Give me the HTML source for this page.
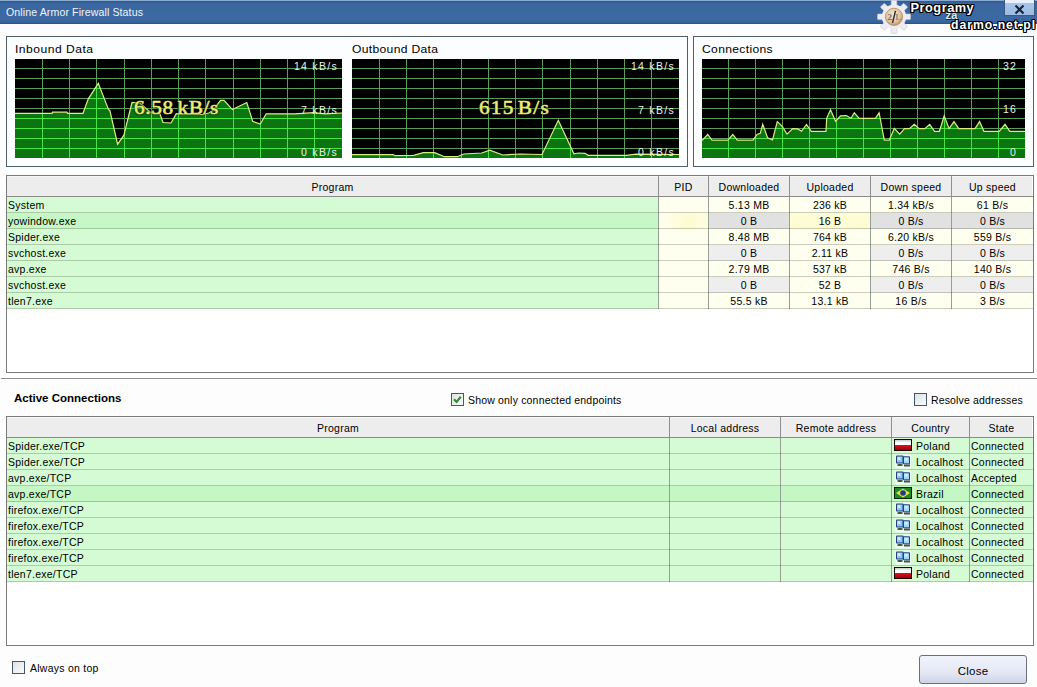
<!DOCTYPE html>
<html><head><meta charset="utf-8"><style>
html,body{margin:0;padding:0}
body{width:1037px;height:687px;position:relative;overflow:hidden;background:#fdfdfd;font-family:"Liberation Sans",sans-serif;font-size:10.5px;color:#000;letter-spacing:0.25px}
.a{position:absolute;white-space:nowrap}
.box{position:absolute;border:1px solid #4e5e6b;background:#fbfdfe}
.lbl{color:#e8f4e8}
.cb{position:absolute;width:11px;height:11px;border:1px solid #44586c;background:linear-gradient(135deg,#dde4e6,#f8fbfb)}
</style></head><body>
<div class="a" style="left:0;top:0;width:1037px;height:24px;background:linear-gradient(#8aaad2 0,#8aaad2 1px,#2f5990 1px,#3a679f 4px,#3c69a1 20px,#34609a 23px,#2a4a74 24px)"></div>
<div class="a" style="left:6px;top:0.13px;line-height:24px;font-size:10.6px;color:#eef4fa;letter-spacing:0.1px;">Online Armor Firewall Status</div>
<div class="box" style="left:6px;top:36px;width:680px;height:129px"></div>
<div class="box" style="left:693px;top:36px;width:339px;height:129px"></div>
<div class="a" style="left:15px;top:41.99px;line-height:14px;font-size:11px;letter-spacing:0.45px;transform:scaleX(1.1);transform-origin:0 0;">Inbound Data</div>
<div class="a" style="left:352px;top:41.99px;line-height:14px;font-size:11px;letter-spacing:0.3px;transform:scaleX(1.1);transform-origin:0 0;">Outbound Data</div>
<div class="a" style="left:702px;top:41.99px;line-height:14px;font-size:11px;letter-spacing:0.3px;transform:scaleX(1.1);transform-origin:0 0;">Connections</div>
<svg class="a" style="left:15px;top:59px" width="327" height="99" viewBox="0 0 327 99">
<rect width="327" height="99" fill="#000"/>
<defs><clipPath id="c15"><polygon points="0,99 0.0,54.3 37.0,54.3 37.5,53.2 52.0,53.2 52.5,54.3 68.0,54.3 73.3,39.8 83.3,24.4 93.4,50.2 95.0,52.0 102.6,85.2 108.8,76.4 117.0,43.5 125.0,44.0 135.0,53.0 145.0,55.0 148.0,63.5 156.0,64.0 161.3,54.6 187.0,55.5 193.8,54.0 197.6,51.5 205.6,41.3 209.0,41.3 217.4,50.6 231.8,43.5 237.7,62.4 245.3,65.0 251.2,54.8 279.9,54.8 298.4,53.7 310.0,54.8 327.0,54.0 327,99"/></clipPath></defs>
<polygon points="0,99 0.0,54.3 37.0,54.3 37.5,53.2 52.0,53.2 52.5,54.3 68.0,54.3 73.3,39.8 83.3,24.4 93.4,50.2 95.0,52.0 102.6,85.2 108.8,76.4 117.0,43.5 125.0,44.0 135.0,53.0 145.0,55.0 148.0,63.5 156.0,64.0 161.3,54.6 187.0,55.5 193.8,54.0 197.6,51.5 205.6,41.3 209.0,41.3 217.4,50.6 231.8,43.5 237.7,62.4 245.3,65.0 251.2,54.8 279.9,54.8 298.4,53.7 310.0,54.8 327.0,54.0 327,99" fill="#0c7411"/>
<path d="M0 9.5H327M0 19.5H327M0 29.5H327M0 39.5H327M0 49.5H327M0 59.5H327M0 69.5H327M0 79.5H327M0 89.5H327M27.5 0V99M54.5 0V99M81.5 0V99M109.5 0V99M136.5 0V99M163.5 0V99M190.5 0V99M218.5 0V99M245.5 0V99M272.5 0V99M299.5 0V99" stroke="#5a9e5a" stroke-width="1" fill="none"/>
<path d="M0 9.5H327M0 19.5H327M0 29.5H327M0 39.5H327M0 49.5H327M0 59.5H327M0 69.5H327M0 79.5H327M0 89.5H327M27.5 0V99M54.5 0V99M81.5 0V99M109.5 0V99M136.5 0V99M163.5 0V99M190.5 0V99M218.5 0V99M245.5 0V99M272.5 0V99M299.5 0V99" stroke="#46e446" stroke-width="1" fill="none" clip-path="url(#c15)"/>
<polyline points="0.0,54.3 37.0,54.3 37.5,53.2 52.0,53.2 52.5,54.3 68.0,54.3 73.3,39.8 83.3,24.4 93.4,50.2 95.0,52.0 102.6,85.2 108.8,76.4 117.0,43.5 125.0,44.0 135.0,53.0 145.0,55.0 148.0,63.5 156.0,64.0 161.3,54.6 187.0,55.5 193.8,54.0 197.6,51.5 205.6,41.3 209.0,41.3 217.4,50.6 231.8,43.5 237.7,62.4 245.3,65.0 251.2,54.8 279.9,54.8 298.4,53.7 310.0,54.8 327.0,54.0" stroke="#d8f080" stroke-width="1.2" fill="none"/>
</svg>
<svg class="a" style="left:352px;top:59px" width="327" height="99" viewBox="0 0 327 99">
<rect width="327" height="99" fill="#000"/>
<defs><clipPath id="c352"><polygon points="0,99 0.0,95.6 41.3,95.6 43.0,96.7 61.6,96.4 71.3,93.6 82.7,93.6 92.4,97.7 105.3,97.7 111.8,95.0 129.7,94.0 137.8,91.2 150.7,96.0 168.0,95.0 190.0,95.5 206.3,61.3 221.9,94.8 226.6,94.0 233.0,94.3 236.2,96.3 274.4,96.3 284.0,95.2 327.0,95.5 327,99"/></clipPath></defs>
<polygon points="0,99 0.0,95.6 41.3,95.6 43.0,96.7 61.6,96.4 71.3,93.6 82.7,93.6 92.4,97.7 105.3,97.7 111.8,95.0 129.7,94.0 137.8,91.2 150.7,96.0 168.0,95.0 190.0,95.5 206.3,61.3 221.9,94.8 226.6,94.0 233.0,94.3 236.2,96.3 274.4,96.3 284.0,95.2 327.0,95.5 327,99" fill="#0c7411"/>
<path d="M0 9.5H327M0 19.5H327M0 29.5H327M0 39.5H327M0 49.5H327M0 59.5H327M0 69.5H327M0 79.5H327M0 89.5H327M27.5 0V99M54.5 0V99M81.5 0V99M109.5 0V99M136.5 0V99M163.5 0V99M190.5 0V99M218.5 0V99M245.5 0V99M272.5 0V99M299.5 0V99" stroke="#5a9e5a" stroke-width="1" fill="none"/>
<path d="M0 9.5H327M0 19.5H327M0 29.5H327M0 39.5H327M0 49.5H327M0 59.5H327M0 69.5H327M0 79.5H327M0 89.5H327M27.5 0V99M54.5 0V99M81.5 0V99M109.5 0V99M136.5 0V99M163.5 0V99M190.5 0V99M218.5 0V99M245.5 0V99M272.5 0V99M299.5 0V99" stroke="#46e446" stroke-width="1" fill="none" clip-path="url(#c352)"/>
<polyline points="0.0,95.6 41.3,95.6 43.0,96.7 61.6,96.4 71.3,93.6 82.7,93.6 92.4,97.7 105.3,97.7 111.8,95.0 129.7,94.0 137.8,91.2 150.7,96.0 168.0,95.0 190.0,95.5 206.3,61.3 221.9,94.8 226.6,94.0 233.0,94.3 236.2,96.3 274.4,96.3 284.0,95.2 327.0,95.5" stroke="#d8f080" stroke-width="1.2" fill="none"/>
</svg>
<svg class="a" style="left:702px;top:59px" width="323" height="99" viewBox="0 0 323 99">
<rect width="323" height="99" fill="#000"/>
<defs><clipPath id="c702"><polygon points="0,99 0.0,81.5 5.7,75.5 10.0,81.2 25.9,81.2 30.8,75.5 35.3,81.2 51.0,81.2 55.1,75.5 58.3,74.4 60.7,65.3 65.6,78.8 70.5,80.9 75.3,62.6 80.2,67.4 85.0,75.1 90.7,69.6 95.6,69.9 99.6,72.3 104.5,65.5 109.3,72.3 124.0,72.3 124.7,59.3 128.5,50.8 133.6,62.3 138.5,56.9 144.2,56.6 149.0,59.3 152.3,53.7 157.1,59.3 173.4,59.3 177.1,53.7 182.3,81.2 187.2,81.2 192.3,69.4 197.7,75.1 202.5,69.6 207.4,69.6 212.3,65.3 217.1,69.6 222.8,69.6 227.7,65.3 232.5,72.3 237.4,72.3 242.2,56.9 247.1,69.6 252.0,62.6 256.8,69.6 273.0,69.6 277.6,62.6 281.9,72.3 297.3,72.3 303.0,65.3 307.8,72.3 323.0,72.3 323,99"/></clipPath></defs>
<polygon points="0,99 0.0,81.5 5.7,75.5 10.0,81.2 25.9,81.2 30.8,75.5 35.3,81.2 51.0,81.2 55.1,75.5 58.3,74.4 60.7,65.3 65.6,78.8 70.5,80.9 75.3,62.6 80.2,67.4 85.0,75.1 90.7,69.6 95.6,69.9 99.6,72.3 104.5,65.5 109.3,72.3 124.0,72.3 124.7,59.3 128.5,50.8 133.6,62.3 138.5,56.9 144.2,56.6 149.0,59.3 152.3,53.7 157.1,59.3 173.4,59.3 177.1,53.7 182.3,81.2 187.2,81.2 192.3,69.4 197.7,75.1 202.5,69.6 207.4,69.6 212.3,65.3 217.1,69.6 222.8,69.6 227.7,65.3 232.5,72.3 237.4,72.3 242.2,56.9 247.1,69.6 252.0,62.6 256.8,69.6 273.0,69.6 277.6,62.6 281.9,72.3 297.3,72.3 303.0,65.3 307.8,72.3 323.0,72.3 323,99" fill="#0c7411"/>
<path d="M0 9.5H323M0 19.5H323M0 29.5H323M0 39.5H323M0 49.5H323M0 59.5H323M0 69.5H323M0 79.5H323M0 89.5H323M26.5 0V99M53.5 0V99M80.5 0V99M107.5 0V99M134.5 0V99M161.5 0V99M188.5 0V99M215.5 0V99M242.5 0V99M269.5 0V99M296.5 0V99" stroke="#5a9e5a" stroke-width="1" fill="none"/>
<path d="M0 9.5H323M0 19.5H323M0 29.5H323M0 39.5H323M0 49.5H323M0 59.5H323M0 69.5H323M0 79.5H323M0 89.5H323M26.5 0V99M53.5 0V99M80.5 0V99M107.5 0V99M134.5 0V99M161.5 0V99M188.5 0V99M215.5 0V99M242.5 0V99M269.5 0V99M296.5 0V99" stroke="#46e446" stroke-width="1" fill="none" clip-path="url(#c702)"/>
<polyline points="0.0,81.5 5.7,75.5 10.0,81.2 25.9,81.2 30.8,75.5 35.3,81.2 51.0,81.2 55.1,75.5 58.3,74.4 60.7,65.3 65.6,78.8 70.5,80.9 75.3,62.6 80.2,67.4 85.0,75.1 90.7,69.6 95.6,69.9 99.6,72.3 104.5,65.5 109.3,72.3 124.0,72.3 124.7,59.3 128.5,50.8 133.6,62.3 138.5,56.9 144.2,56.6 149.0,59.3 152.3,53.7 157.1,59.3 173.4,59.3 177.1,53.7 182.3,81.2 187.2,81.2 192.3,69.4 197.7,75.1 202.5,69.6 207.4,69.6 212.3,65.3 217.1,69.6 222.8,69.6 227.7,65.3 232.5,72.3 237.4,72.3 242.2,56.9 247.1,69.6 252.0,62.6 256.8,69.6 273.0,69.6 277.6,62.6 281.9,72.3 297.3,72.3 303.0,65.3 307.8,72.3 323.0,72.3" stroke="#d8f080" stroke-width="1.2" fill="none"/>
</svg>
<div class="a" style="right:699px;text-align:right;top:59.16px;line-height:14px;font-size:10.5px;color:#e8f2e8;letter-spacing:1.3px;">14 kB/s</div>
<div class="a" style="right:699px;text-align:right;top:102.66px;line-height:14px;font-size:10.5px;color:#e8f2e8;letter-spacing:1.3px;">7 kB/s</div>
<div class="a" style="right:699px;text-align:right;top:144.86px;line-height:14px;font-size:10.5px;color:#e8f2e8;letter-spacing:1.3px;">0 kB/s</div>
<div class="a" style="right:362px;text-align:right;top:59.16px;line-height:14px;font-size:10.5px;color:#e8f2e8;letter-spacing:1.3px;">14 kB/s</div>
<div class="a" style="right:362px;text-align:right;top:102.66px;line-height:14px;font-size:10.5px;color:#e8f2e8;letter-spacing:1.3px;">7 kB/s</div>
<div class="a" style="right:362px;text-align:right;top:144.86px;line-height:14px;font-size:10.5px;color:#e8f2e8;letter-spacing:1.3px;">0 kB/s</div>
<div class="a" style="right:20px;text-align:right;top:59.36px;line-height:14px;font-size:10.5px;color:#e8f2e8;letter-spacing:1.2px;">32</div>
<div class="a" style="right:20px;text-align:right;top:102.06px;line-height:14px;font-size:10.5px;color:#e8f2e8;letter-spacing:1.2px;">16</div>
<div class="a" style="right:20px;text-align:right;top:144.96px;line-height:14px;font-size:10.5px;color:#e8f2e8;letter-spacing:1.2px;">0</div>
<div class="a" style="left:134px;top:97.62px;line-height:20px;font-size:19px;font-family:'Liberation Serif',serif;font-weight:normal;-webkit-text-stroke:0.6px #e6e66c;color:#eeee80;text-shadow:0 0 2px #000,0 0 2px #000,0 0 1px #000;letter-spacing:0.55px;word-spacing:-2px;transform:scaleX(1.12);transform-origin:0 0;">6.58 kB/s</div>
<div class="a" style="left:479px;top:97.62px;line-height:20px;font-size:19px;font-family:'Liberation Serif',serif;font-weight:normal;-webkit-text-stroke:0.6px #e6e66c;color:#eeee80;text-shadow:0 0 2px #000,0 0 2px #000,0 0 1px #000;letter-spacing:1.1px;word-spacing:-3px;transform:scaleX(1.12);transform-origin:0 0;">615 B/s</div>
<div class="a" style="left:6px;top:175px;width:1026px;height:196px;border:1px solid #7a7a7a;background:#fff"></div>
<div class="a" style="left:7px;top:176px;width:1026px;height:20px;background:#ededed"></div>
<div class="a" style="left:7px;top:196px;width:1026px;height:1px;background:#8a8a8a"></div>
<div class="a" style="left:7px;top:176px;width:1026px;height:1px;background:#f8f8f8"></div>
<div class="a" style="left:1032px;top:176px;width:1px;height:20px;background:#fbfbfb"></div>
<div class="a" style="left:7px;width:651px;text-align:center;top:179.16px;line-height:16px;font-size:10.5px;">Program</div>
<div class="a" style="left:659px;width:49px;text-align:center;top:179.16px;line-height:16px;font-size:10.5px;">PID</div>
<div class="a" style="left:709px;width:80px;text-align:center;top:179.16px;line-height:16px;font-size:10.5px;">Downloaded</div>
<div class="a" style="left:790px;width:80px;text-align:center;top:179.16px;line-height:16px;font-size:10.5px;">Uploaded</div>
<div class="a" style="left:871px;width:80px;text-align:center;top:179.16px;line-height:16px;font-size:10.5px;">Down speed</div>
<div class="a" style="left:952px;width:81px;text-align:center;top:179.16px;line-height:16px;font-size:10.5px;">Up speed</div>
<div class="a" style="left:658px;top:176px;width:1px;height:20px;background:#8f8f8f"></div>
<div class="a" style="left:708px;top:176px;width:1px;height:20px;background:#8f8f8f"></div>
<div class="a" style="left:789px;top:176px;width:1px;height:20px;background:#8f8f8f"></div>
<div class="a" style="left:870px;top:176px;width:1px;height:20px;background:#8f8f8f"></div>
<div class="a" style="left:951px;top:176px;width:1px;height:20px;background:#8f8f8f"></div>
<div class="a" style="left:7px;top:197px;width:651px;height:16px;background:#d5fbd5"></div>
<div class="a" style="left:659px;top:197px;width:49px;height:16px;background:#fffff0"></div>
<div class="a" style="left:709px;top:197px;width:80px;height:16px;background:#fffff0"></div>
<div class="a" style="left:790px;top:197px;width:80px;height:16px;background:#fffff0"></div>
<div class="a" style="left:871px;top:197px;width:80px;height:16px;background:#fffff0"></div>
<div class="a" style="left:952px;top:197px;width:81px;height:16px;background:#fffff0"></div>
<div class="a" style="left:7px;top:212px;width:1026px;height:1px;background:rgba(40,50,20,0.24)"></div>
<div class="a" style="left:658px;top:197px;width:1px;height:16px;background:rgba(0,30,0,0.42)"></div>
<div class="a" style="left:708px;top:197px;width:1px;height:16px;background:rgba(0,30,0,0.42)"></div>
<div class="a" style="left:789px;top:197px;width:1px;height:16px;background:rgba(0,30,0,0.42)"></div>
<div class="a" style="left:870px;top:197px;width:1px;height:16px;background:rgba(0,30,0,0.42)"></div>
<div class="a" style="left:951px;top:197px;width:1px;height:16px;background:rgba(0,30,0,0.42)"></div>
<div class="a" style="left:8px;top:197.06px;line-height:16px;font-size:10.5px;">System</div>
<div class="a" style="left:709px;width:80px;text-align:center;top:197.06px;line-height:16px;font-size:10.5px;">5.13 MB</div>
<div class="a" style="left:790px;width:80px;text-align:center;top:197.06px;line-height:16px;font-size:10.5px;">236 kB</div>
<div class="a" style="left:871px;width:80px;text-align:center;top:197.06px;line-height:16px;font-size:10.5px;">1.34 kB/s</div>
<div class="a" style="left:952px;width:81px;text-align:center;top:197.06px;line-height:16px;font-size:10.5px;">61 B/s</div>
<div class="a" style="left:7px;top:213px;width:651px;height:16px;background:#c6f7c6"></div>
<div class="a" style="left:659px;top:213px;width:49px;height:16px;background:linear-gradient(90deg,#fffff0,#fdfbd2 60%,#fefce0)"></div>
<div class="a" style="left:709px;top:213px;width:80px;height:16px;background:#e1e1e1"></div>
<div class="a" style="left:790px;top:213px;width:80px;height:16px;background:#fdfcd4"></div>
<div class="a" style="left:871px;top:213px;width:80px;height:16px;background:#e1e1e1"></div>
<div class="a" style="left:952px;top:213px;width:81px;height:16px;background:#e1e1e1"></div>
<div class="a" style="left:7px;top:228px;width:1026px;height:1px;background:rgba(40,50,20,0.24)"></div>
<div class="a" style="left:658px;top:213px;width:1px;height:16px;background:rgba(0,30,0,0.42)"></div>
<div class="a" style="left:708px;top:213px;width:1px;height:16px;background:rgba(0,30,0,0.42)"></div>
<div class="a" style="left:789px;top:213px;width:1px;height:16px;background:rgba(0,30,0,0.42)"></div>
<div class="a" style="left:870px;top:213px;width:1px;height:16px;background:rgba(0,30,0,0.42)"></div>
<div class="a" style="left:951px;top:213px;width:1px;height:16px;background:rgba(0,30,0,0.42)"></div>
<div class="a" style="left:8px;top:213.06px;line-height:16px;font-size:10.5px;">yowindow.exe</div>
<div class="a" style="left:709px;width:80px;text-align:center;top:213.06px;line-height:16px;font-size:10.5px;">0 B</div>
<div class="a" style="left:790px;width:80px;text-align:center;top:213.06px;line-height:16px;font-size:10.5px;">16 B</div>
<div class="a" style="left:871px;width:80px;text-align:center;top:213.06px;line-height:16px;font-size:10.5px;">0 B/s</div>
<div class="a" style="left:952px;width:81px;text-align:center;top:213.06px;line-height:16px;font-size:10.5px;">0 B/s</div>
<div class="a" style="left:7px;top:229px;width:651px;height:16px;background:#d5fbd5"></div>
<div class="a" style="left:659px;top:229px;width:49px;height:16px;background:#fffff0"></div>
<div class="a" style="left:709px;top:229px;width:80px;height:16px;background:#fffff0"></div>
<div class="a" style="left:790px;top:229px;width:80px;height:16px;background:#fffff0"></div>
<div class="a" style="left:871px;top:229px;width:80px;height:16px;background:#fffff0"></div>
<div class="a" style="left:952px;top:229px;width:81px;height:16px;background:#fffff0"></div>
<div class="a" style="left:7px;top:244px;width:1026px;height:1px;background:rgba(40,50,20,0.24)"></div>
<div class="a" style="left:658px;top:229px;width:1px;height:16px;background:rgba(0,30,0,0.42)"></div>
<div class="a" style="left:708px;top:229px;width:1px;height:16px;background:rgba(0,30,0,0.42)"></div>
<div class="a" style="left:789px;top:229px;width:1px;height:16px;background:rgba(0,30,0,0.42)"></div>
<div class="a" style="left:870px;top:229px;width:1px;height:16px;background:rgba(0,30,0,0.42)"></div>
<div class="a" style="left:951px;top:229px;width:1px;height:16px;background:rgba(0,30,0,0.42)"></div>
<div class="a" style="left:8px;top:229.06px;line-height:16px;font-size:10.5px;">Spider.exe</div>
<div class="a" style="left:709px;width:80px;text-align:center;top:229.06px;line-height:16px;font-size:10.5px;">8.48 MB</div>
<div class="a" style="left:790px;width:80px;text-align:center;top:229.06px;line-height:16px;font-size:10.5px;">764 kB</div>
<div class="a" style="left:871px;width:80px;text-align:center;top:229.06px;line-height:16px;font-size:10.5px;">6.20 kB/s</div>
<div class="a" style="left:952px;width:81px;text-align:center;top:229.06px;line-height:16px;font-size:10.5px;">559 B/s</div>
<div class="a" style="left:7px;top:245px;width:651px;height:16px;background:#d5fbd5"></div>
<div class="a" style="left:659px;top:245px;width:49px;height:16px;background:#fffff0"></div>
<div class="a" style="left:709px;top:245px;width:80px;height:16px;background:#eeeeee"></div>
<div class="a" style="left:790px;top:245px;width:80px;height:16px;background:#fffff0"></div>
<div class="a" style="left:871px;top:245px;width:80px;height:16px;background:#eeeeee"></div>
<div class="a" style="left:952px;top:245px;width:81px;height:16px;background:#eeeeee"></div>
<div class="a" style="left:7px;top:260px;width:1026px;height:1px;background:rgba(40,50,20,0.24)"></div>
<div class="a" style="left:658px;top:245px;width:1px;height:16px;background:rgba(0,30,0,0.42)"></div>
<div class="a" style="left:708px;top:245px;width:1px;height:16px;background:rgba(0,30,0,0.42)"></div>
<div class="a" style="left:789px;top:245px;width:1px;height:16px;background:rgba(0,30,0,0.42)"></div>
<div class="a" style="left:870px;top:245px;width:1px;height:16px;background:rgba(0,30,0,0.42)"></div>
<div class="a" style="left:951px;top:245px;width:1px;height:16px;background:rgba(0,30,0,0.42)"></div>
<div class="a" style="left:8px;top:245.06px;line-height:16px;font-size:10.5px;">svchost.exe</div>
<div class="a" style="left:709px;width:80px;text-align:center;top:245.06px;line-height:16px;font-size:10.5px;">0 B</div>
<div class="a" style="left:790px;width:80px;text-align:center;top:245.06px;line-height:16px;font-size:10.5px;">2.11 kB</div>
<div class="a" style="left:871px;width:80px;text-align:center;top:245.06px;line-height:16px;font-size:10.5px;">0 B/s</div>
<div class="a" style="left:952px;width:81px;text-align:center;top:245.06px;line-height:16px;font-size:10.5px;">0 B/s</div>
<div class="a" style="left:7px;top:261px;width:651px;height:16px;background:#d5fbd5"></div>
<div class="a" style="left:659px;top:261px;width:49px;height:16px;background:#fffff0"></div>
<div class="a" style="left:709px;top:261px;width:80px;height:16px;background:#fffff0"></div>
<div class="a" style="left:790px;top:261px;width:80px;height:16px;background:#fffff0"></div>
<div class="a" style="left:871px;top:261px;width:80px;height:16px;background:#fffff0"></div>
<div class="a" style="left:952px;top:261px;width:81px;height:16px;background:#fffff0"></div>
<div class="a" style="left:7px;top:276px;width:1026px;height:1px;background:rgba(40,50,20,0.24)"></div>
<div class="a" style="left:658px;top:261px;width:1px;height:16px;background:rgba(0,30,0,0.42)"></div>
<div class="a" style="left:708px;top:261px;width:1px;height:16px;background:rgba(0,30,0,0.42)"></div>
<div class="a" style="left:789px;top:261px;width:1px;height:16px;background:rgba(0,30,0,0.42)"></div>
<div class="a" style="left:870px;top:261px;width:1px;height:16px;background:rgba(0,30,0,0.42)"></div>
<div class="a" style="left:951px;top:261px;width:1px;height:16px;background:rgba(0,30,0,0.42)"></div>
<div class="a" style="left:8px;top:261.06px;line-height:16px;font-size:10.5px;">avp.exe</div>
<div class="a" style="left:709px;width:80px;text-align:center;top:261.06px;line-height:16px;font-size:10.5px;">2.79 MB</div>
<div class="a" style="left:790px;width:80px;text-align:center;top:261.06px;line-height:16px;font-size:10.5px;">537 kB</div>
<div class="a" style="left:871px;width:80px;text-align:center;top:261.06px;line-height:16px;font-size:10.5px;">746 B/s</div>
<div class="a" style="left:952px;width:81px;text-align:center;top:261.06px;line-height:16px;font-size:10.5px;">140 B/s</div>
<div class="a" style="left:7px;top:277px;width:651px;height:16px;background:#d5fbd5"></div>
<div class="a" style="left:659px;top:277px;width:49px;height:16px;background:#fffff0"></div>
<div class="a" style="left:709px;top:277px;width:80px;height:16px;background:#eeeeee"></div>
<div class="a" style="left:790px;top:277px;width:80px;height:16px;background:#fffff0"></div>
<div class="a" style="left:871px;top:277px;width:80px;height:16px;background:#eeeeee"></div>
<div class="a" style="left:952px;top:277px;width:81px;height:16px;background:#eeeeee"></div>
<div class="a" style="left:7px;top:292px;width:1026px;height:1px;background:rgba(40,50,20,0.24)"></div>
<div class="a" style="left:658px;top:277px;width:1px;height:16px;background:rgba(0,30,0,0.42)"></div>
<div class="a" style="left:708px;top:277px;width:1px;height:16px;background:rgba(0,30,0,0.42)"></div>
<div class="a" style="left:789px;top:277px;width:1px;height:16px;background:rgba(0,30,0,0.42)"></div>
<div class="a" style="left:870px;top:277px;width:1px;height:16px;background:rgba(0,30,0,0.42)"></div>
<div class="a" style="left:951px;top:277px;width:1px;height:16px;background:rgba(0,30,0,0.42)"></div>
<div class="a" style="left:8px;top:277.06px;line-height:16px;font-size:10.5px;">svchost.exe</div>
<div class="a" style="left:709px;width:80px;text-align:center;top:277.06px;line-height:16px;font-size:10.5px;">0 B</div>
<div class="a" style="left:790px;width:80px;text-align:center;top:277.06px;line-height:16px;font-size:10.5px;">52 B</div>
<div class="a" style="left:871px;width:80px;text-align:center;top:277.06px;line-height:16px;font-size:10.5px;">0 B/s</div>
<div class="a" style="left:952px;width:81px;text-align:center;top:277.06px;line-height:16px;font-size:10.5px;">0 B/s</div>
<div class="a" style="left:7px;top:293px;width:651px;height:16px;background:#d5fbd5"></div>
<div class="a" style="left:659px;top:293px;width:49px;height:16px;background:#fffff0"></div>
<div class="a" style="left:709px;top:293px;width:80px;height:16px;background:#fffff0"></div>
<div class="a" style="left:790px;top:293px;width:80px;height:16px;background:#fffff0"></div>
<div class="a" style="left:871px;top:293px;width:80px;height:16px;background:#fffff0"></div>
<div class="a" style="left:952px;top:293px;width:81px;height:16px;background:#fffff0"></div>
<div class="a" style="left:7px;top:308px;width:1026px;height:1px;background:rgba(40,50,20,0.24)"></div>
<div class="a" style="left:658px;top:293px;width:1px;height:16px;background:rgba(0,30,0,0.42)"></div>
<div class="a" style="left:708px;top:293px;width:1px;height:16px;background:rgba(0,30,0,0.42)"></div>
<div class="a" style="left:789px;top:293px;width:1px;height:16px;background:rgba(0,30,0,0.42)"></div>
<div class="a" style="left:870px;top:293px;width:1px;height:16px;background:rgba(0,30,0,0.42)"></div>
<div class="a" style="left:951px;top:293px;width:1px;height:16px;background:rgba(0,30,0,0.42)"></div>
<div class="a" style="left:8px;top:293.06px;line-height:16px;font-size:10.5px;">tlen7.exe</div>
<div class="a" style="left:709px;width:80px;text-align:center;top:293.06px;line-height:16px;font-size:10.5px;">55.5 kB</div>
<div class="a" style="left:790px;width:80px;text-align:center;top:293.06px;line-height:16px;font-size:10.5px;">13.1 kB</div>
<div class="a" style="left:871px;width:80px;text-align:center;top:293.06px;line-height:16px;font-size:10.5px;">16 B/s</div>
<div class="a" style="left:952px;width:81px;text-align:center;top:293.06px;line-height:16px;font-size:10.5px;">3 B/s</div>
<div class="a" style="left:1px;top:378px;width:1036px;height:1px;background:#8c8c8c"></div>
<div class="a" style="left:1px;top:379px;width:1036px;height:1px;background:#ffffff"></div>
<div class="a" style="left:14px;top:389.72px;line-height:16px;font-size:11.5px;font-weight:bold;letter-spacing:0px;">Active Connections</div>
<div class="cb" style="left:451px;top:393px"></div>
<svg class="a" style="left:451px;top:393px" width="13" height="13" viewBox="0 0 13 13"><path d="M3 6.2 L5.6 8.9 L9.8 3.8" stroke="#3a8a3a" stroke-width="2.2" fill="none"/></svg>
<div class="a" style="left:468px;top:392.26px;line-height:16px;font-size:10.5px;letter-spacing:0.18px;">Show only connected endpoints</div>
<div class="cb" style="left:914px;top:393px"></div>
<div class="a" style="left:931px;top:392.26px;line-height:16px;font-size:10.5px;letter-spacing:0.15px;">Resolve addresses</div>
<div class="a" style="left:6px;top:416px;width:1026px;height:228px;border:1px solid #7a7a7a;background:#fff"></div>
<div class="a" style="left:7px;top:417px;width:1026px;height:20px;background:#ededed"></div>
<div class="a" style="left:7px;top:437px;width:1026px;height:1px;background:#8a8a8a"></div>
<div class="a" style="left:7px;top:417px;width:1026px;height:1px;background:#f8f8f8"></div>
<div class="a" style="left:1032px;top:417px;width:1px;height:20px;background:#fbfbfb"></div>
<div class="a" style="left:7px;width:662px;text-align:center;top:420.16px;line-height:16px;font-size:10.5px;">Program</div>
<div class="a" style="left:670px;width:110px;text-align:center;top:420.16px;line-height:16px;font-size:10.5px;">Local address</div>
<div class="a" style="left:781px;width:110px;text-align:center;top:420.16px;line-height:16px;font-size:10.5px;">Remote address</div>
<div class="a" style="left:892px;width:77px;text-align:center;top:420.16px;line-height:16px;font-size:10.5px;">Country</div>
<div class="a" style="left:970px;width:63px;text-align:center;top:420.16px;line-height:16px;font-size:10.5px;">State</div>
<div class="a" style="left:669px;top:417px;width:1px;height:20px;background:#8f8f8f"></div>
<div class="a" style="left:780px;top:417px;width:1px;height:20px;background:#8f8f8f"></div>
<div class="a" style="left:891px;top:417px;width:1px;height:20px;background:#8f8f8f"></div>
<div class="a" style="left:969px;top:417px;width:1px;height:20px;background:#8f8f8f"></div>
<div class="a" style="left:7px;top:438px;width:662px;height:16px;background:#d5fbd5"></div>
<div class="a" style="left:670px;top:438px;width:110px;height:16px;background:#d5fbd5"></div>
<div class="a" style="left:781px;top:438px;width:110px;height:16px;background:#d5fbd5"></div>
<div class="a" style="left:892px;top:438px;width:77px;height:16px;background:#d5fbd5"></div>
<div class="a" style="left:970px;top:438px;width:63px;height:16px;background:#d5fbd5"></div>
<div class="a" style="left:7px;top:453px;width:1026px;height:1px;background:rgba(40,50,20,0.24)"></div>
<div class="a" style="left:669px;top:438px;width:1px;height:16px;background:rgba(0,30,0,0.42)"></div>
<div class="a" style="left:780px;top:438px;width:1px;height:16px;background:rgba(0,30,0,0.42)"></div>
<div class="a" style="left:891px;top:438px;width:1px;height:16px;background:rgba(0,30,0,0.42)"></div>
<div class="a" style="left:969px;top:438px;width:1px;height:16px;background:rgba(0,30,0,0.42)"></div>
<div class="a" style="left:8px;top:438.06px;line-height:16px;font-size:10.5px;">Spider.exe/TCP</div>
<svg class="a" style="left:894px;top:439px" width="18" height="12" viewBox="0 0 18 12"><defs><linearGradient id="plw" x1="0" y1="0" x2="0" y2="1"><stop offset="0" stop-color="#c8c8c8"/><stop offset="0.5" stop-color="#ffffff"/></linearGradient><linearGradient id="plr" x1="0" y1="0" x2="0" y2="1"><stop offset="0" stop-color="#e01020"/><stop offset="1" stop-color="#a00010"/></linearGradient></defs><rect x="0" y="0" width="18" height="12" fill="#1a0000"/><rect x="1" y="1" width="16" height="5" fill="url(#plw)"/><rect x="1" y="6" width="16" height="5" fill="url(#plr)"/></svg><div class="a" style="left:916px;top:438.06px;line-height:16px;font-size:10.5px;">Poland</div>
<div class="a" style="left:971px;top:438.06px;line-height:16px;font-size:10.5px;">Connected</div>
<div class="a" style="left:7px;top:454px;width:662px;height:16px;background:#d5fbd5"></div>
<div class="a" style="left:670px;top:454px;width:110px;height:16px;background:#d5fbd5"></div>
<div class="a" style="left:781px;top:454px;width:110px;height:16px;background:#d5fbd5"></div>
<div class="a" style="left:892px;top:454px;width:77px;height:16px;background:#d5fbd5"></div>
<div class="a" style="left:970px;top:454px;width:63px;height:16px;background:#d5fbd5"></div>
<div class="a" style="left:7px;top:469px;width:1026px;height:1px;background:rgba(40,50,20,0.24)"></div>
<div class="a" style="left:669px;top:454px;width:1px;height:16px;background:rgba(0,30,0,0.42)"></div>
<div class="a" style="left:780px;top:454px;width:1px;height:16px;background:rgba(0,30,0,0.42)"></div>
<div class="a" style="left:891px;top:454px;width:1px;height:16px;background:rgba(0,30,0,0.42)"></div>
<div class="a" style="left:969px;top:454px;width:1px;height:16px;background:rgba(0,30,0,0.42)"></div>
<div class="a" style="left:8px;top:454.06px;line-height:16px;font-size:10.5px;">Spider.exe/TCP</div>
<svg class="a" style="left:894px;top:454px" width="18" height="15" viewBox="0 0 18 15"><rect x="1" y="0.5" width="16" height="14" rx="2" fill="#f2fbf4" opacity="0.85"/><rect x="2" y="1.5" width="7.5" height="8" rx="0.8" fill="#263a78"/><rect x="3" y="2.5" width="5.5" height="6" fill="#8cc8f4"/><rect x="3.5" y="3" width="3" height="3" fill="#c0ecff"/><ellipse cx="6" cy="11" rx="3" ry="1.1" fill="#2e4a3a"/><rect x="9" y="2.3" width="7" height="8" rx="0.8" fill="#2a3f80"/><rect x="10" y="3.3" width="5" height="6" fill="#9ad8fc"/><rect x="10.5" y="3.8" width="3" height="3" fill="#c8f0ff"/><rect x="10" y="10.5" width="6" height="2" fill="#46505a"/></svg><div class="a" style="left:916px;top:454.06px;line-height:16px;font-size:10.5px;">Localhost</div>
<div class="a" style="left:971px;top:454.06px;line-height:16px;font-size:10.5px;">Connected</div>
<div class="a" style="left:7px;top:470px;width:662px;height:16px;background:#d5fbd5"></div>
<div class="a" style="left:670px;top:470px;width:110px;height:16px;background:#d5fbd5"></div>
<div class="a" style="left:781px;top:470px;width:110px;height:16px;background:#d5fbd5"></div>
<div class="a" style="left:892px;top:470px;width:77px;height:16px;background:#d5fbd5"></div>
<div class="a" style="left:970px;top:470px;width:63px;height:16px;background:#d5fbd5"></div>
<div class="a" style="left:7px;top:485px;width:1026px;height:1px;background:rgba(40,50,20,0.24)"></div>
<div class="a" style="left:669px;top:470px;width:1px;height:16px;background:rgba(0,30,0,0.42)"></div>
<div class="a" style="left:780px;top:470px;width:1px;height:16px;background:rgba(0,30,0,0.42)"></div>
<div class="a" style="left:891px;top:470px;width:1px;height:16px;background:rgba(0,30,0,0.42)"></div>
<div class="a" style="left:969px;top:470px;width:1px;height:16px;background:rgba(0,30,0,0.42)"></div>
<div class="a" style="left:8px;top:470.06px;line-height:16px;font-size:10.5px;">avp.exe/TCP</div>
<svg class="a" style="left:894px;top:470px" width="18" height="15" viewBox="0 0 18 15"><rect x="1" y="0.5" width="16" height="14" rx="2" fill="#f2fbf4" opacity="0.85"/><rect x="2" y="1.5" width="7.5" height="8" rx="0.8" fill="#263a78"/><rect x="3" y="2.5" width="5.5" height="6" fill="#8cc8f4"/><rect x="3.5" y="3" width="3" height="3" fill="#c0ecff"/><ellipse cx="6" cy="11" rx="3" ry="1.1" fill="#2e4a3a"/><rect x="9" y="2.3" width="7" height="8" rx="0.8" fill="#2a3f80"/><rect x="10" y="3.3" width="5" height="6" fill="#9ad8fc"/><rect x="10.5" y="3.8" width="3" height="3" fill="#c8f0ff"/><rect x="10" y="10.5" width="6" height="2" fill="#46505a"/></svg><div class="a" style="left:916px;top:470.06px;line-height:16px;font-size:10.5px;">Localhost</div>
<div class="a" style="left:971px;top:470.06px;line-height:16px;font-size:10.5px;">Accepted</div>
<div class="a" style="left:7px;top:486px;width:662px;height:16px;background:#c4f7c4"></div>
<div class="a" style="left:670px;top:486px;width:110px;height:16px;background:#c4f7c4"></div>
<div class="a" style="left:781px;top:486px;width:110px;height:16px;background:#c4f7c4"></div>
<div class="a" style="left:892px;top:486px;width:77px;height:16px;background:#c4f7c4"></div>
<div class="a" style="left:970px;top:486px;width:63px;height:16px;background:#c4f7c4"></div>
<div class="a" style="left:7px;top:501px;width:1026px;height:1px;background:rgba(40,50,20,0.24)"></div>
<div class="a" style="left:669px;top:486px;width:1px;height:16px;background:rgba(0,30,0,0.42)"></div>
<div class="a" style="left:780px;top:486px;width:1px;height:16px;background:rgba(0,30,0,0.42)"></div>
<div class="a" style="left:891px;top:486px;width:1px;height:16px;background:rgba(0,30,0,0.42)"></div>
<div class="a" style="left:969px;top:486px;width:1px;height:16px;background:rgba(0,30,0,0.42)"></div>
<div class="a" style="left:8px;top:486.06px;line-height:16px;font-size:10.5px;">avp.exe/TCP</div>
<svg class="a" style="left:894px;top:487px" width="18" height="12" viewBox="0 0 18 12"><rect x="0" y="0" width="18" height="12" fill="#002000"/><rect x="1" y="1" width="16" height="10" fill="#1a8a2a"/><polygon points="9,1.5 16,6 9,10.5 2,6" fill="#e8e040"/><circle cx="9" cy="6" r="2.8" fill="#203a90"/></svg><div class="a" style="left:916px;top:486.06px;line-height:16px;font-size:10.5px;">Brazil</div>
<div class="a" style="left:971px;top:486.06px;line-height:16px;font-size:10.5px;">Connected</div>
<div class="a" style="left:7px;top:502px;width:662px;height:16px;background:#d5fbd5"></div>
<div class="a" style="left:670px;top:502px;width:110px;height:16px;background:#d5fbd5"></div>
<div class="a" style="left:781px;top:502px;width:110px;height:16px;background:#d5fbd5"></div>
<div class="a" style="left:892px;top:502px;width:77px;height:16px;background:#d5fbd5"></div>
<div class="a" style="left:970px;top:502px;width:63px;height:16px;background:#d5fbd5"></div>
<div class="a" style="left:7px;top:517px;width:1026px;height:1px;background:rgba(40,50,20,0.24)"></div>
<div class="a" style="left:669px;top:502px;width:1px;height:16px;background:rgba(0,30,0,0.42)"></div>
<div class="a" style="left:780px;top:502px;width:1px;height:16px;background:rgba(0,30,0,0.42)"></div>
<div class="a" style="left:891px;top:502px;width:1px;height:16px;background:rgba(0,30,0,0.42)"></div>
<div class="a" style="left:969px;top:502px;width:1px;height:16px;background:rgba(0,30,0,0.42)"></div>
<div class="a" style="left:8px;top:502.06px;line-height:16px;font-size:10.5px;">firefox.exe/TCP</div>
<svg class="a" style="left:894px;top:502px" width="18" height="15" viewBox="0 0 18 15"><rect x="1" y="0.5" width="16" height="14" rx="2" fill="#f2fbf4" opacity="0.85"/><rect x="2" y="1.5" width="7.5" height="8" rx="0.8" fill="#263a78"/><rect x="3" y="2.5" width="5.5" height="6" fill="#8cc8f4"/><rect x="3.5" y="3" width="3" height="3" fill="#c0ecff"/><ellipse cx="6" cy="11" rx="3" ry="1.1" fill="#2e4a3a"/><rect x="9" y="2.3" width="7" height="8" rx="0.8" fill="#2a3f80"/><rect x="10" y="3.3" width="5" height="6" fill="#9ad8fc"/><rect x="10.5" y="3.8" width="3" height="3" fill="#c8f0ff"/><rect x="10" y="10.5" width="6" height="2" fill="#46505a"/></svg><div class="a" style="left:916px;top:502.06px;line-height:16px;font-size:10.5px;">Localhost</div>
<div class="a" style="left:971px;top:502.06px;line-height:16px;font-size:10.5px;">Connected</div>
<div class="a" style="left:7px;top:518px;width:662px;height:16px;background:#d5fbd5"></div>
<div class="a" style="left:670px;top:518px;width:110px;height:16px;background:#d5fbd5"></div>
<div class="a" style="left:781px;top:518px;width:110px;height:16px;background:#d5fbd5"></div>
<div class="a" style="left:892px;top:518px;width:77px;height:16px;background:#d5fbd5"></div>
<div class="a" style="left:970px;top:518px;width:63px;height:16px;background:#d5fbd5"></div>
<div class="a" style="left:7px;top:533px;width:1026px;height:1px;background:rgba(40,50,20,0.24)"></div>
<div class="a" style="left:669px;top:518px;width:1px;height:16px;background:rgba(0,30,0,0.42)"></div>
<div class="a" style="left:780px;top:518px;width:1px;height:16px;background:rgba(0,30,0,0.42)"></div>
<div class="a" style="left:891px;top:518px;width:1px;height:16px;background:rgba(0,30,0,0.42)"></div>
<div class="a" style="left:969px;top:518px;width:1px;height:16px;background:rgba(0,30,0,0.42)"></div>
<div class="a" style="left:8px;top:518.06px;line-height:16px;font-size:10.5px;">firefox.exe/TCP</div>
<svg class="a" style="left:894px;top:518px" width="18" height="15" viewBox="0 0 18 15"><rect x="1" y="0.5" width="16" height="14" rx="2" fill="#f2fbf4" opacity="0.85"/><rect x="2" y="1.5" width="7.5" height="8" rx="0.8" fill="#263a78"/><rect x="3" y="2.5" width="5.5" height="6" fill="#8cc8f4"/><rect x="3.5" y="3" width="3" height="3" fill="#c0ecff"/><ellipse cx="6" cy="11" rx="3" ry="1.1" fill="#2e4a3a"/><rect x="9" y="2.3" width="7" height="8" rx="0.8" fill="#2a3f80"/><rect x="10" y="3.3" width="5" height="6" fill="#9ad8fc"/><rect x="10.5" y="3.8" width="3" height="3" fill="#c8f0ff"/><rect x="10" y="10.5" width="6" height="2" fill="#46505a"/></svg><div class="a" style="left:916px;top:518.06px;line-height:16px;font-size:10.5px;">Localhost</div>
<div class="a" style="left:971px;top:518.06px;line-height:16px;font-size:10.5px;">Connected</div>
<div class="a" style="left:7px;top:534px;width:662px;height:16px;background:#d5fbd5"></div>
<div class="a" style="left:670px;top:534px;width:110px;height:16px;background:#d5fbd5"></div>
<div class="a" style="left:781px;top:534px;width:110px;height:16px;background:#d5fbd5"></div>
<div class="a" style="left:892px;top:534px;width:77px;height:16px;background:#d5fbd5"></div>
<div class="a" style="left:970px;top:534px;width:63px;height:16px;background:#d5fbd5"></div>
<div class="a" style="left:7px;top:549px;width:1026px;height:1px;background:rgba(40,50,20,0.24)"></div>
<div class="a" style="left:669px;top:534px;width:1px;height:16px;background:rgba(0,30,0,0.42)"></div>
<div class="a" style="left:780px;top:534px;width:1px;height:16px;background:rgba(0,30,0,0.42)"></div>
<div class="a" style="left:891px;top:534px;width:1px;height:16px;background:rgba(0,30,0,0.42)"></div>
<div class="a" style="left:969px;top:534px;width:1px;height:16px;background:rgba(0,30,0,0.42)"></div>
<div class="a" style="left:8px;top:534.06px;line-height:16px;font-size:10.5px;">firefox.exe/TCP</div>
<svg class="a" style="left:894px;top:534px" width="18" height="15" viewBox="0 0 18 15"><rect x="1" y="0.5" width="16" height="14" rx="2" fill="#f2fbf4" opacity="0.85"/><rect x="2" y="1.5" width="7.5" height="8" rx="0.8" fill="#263a78"/><rect x="3" y="2.5" width="5.5" height="6" fill="#8cc8f4"/><rect x="3.5" y="3" width="3" height="3" fill="#c0ecff"/><ellipse cx="6" cy="11" rx="3" ry="1.1" fill="#2e4a3a"/><rect x="9" y="2.3" width="7" height="8" rx="0.8" fill="#2a3f80"/><rect x="10" y="3.3" width="5" height="6" fill="#9ad8fc"/><rect x="10.5" y="3.8" width="3" height="3" fill="#c8f0ff"/><rect x="10" y="10.5" width="6" height="2" fill="#46505a"/></svg><div class="a" style="left:916px;top:534.06px;line-height:16px;font-size:10.5px;">Localhost</div>
<div class="a" style="left:971px;top:534.06px;line-height:16px;font-size:10.5px;">Connected</div>
<div class="a" style="left:7px;top:550px;width:662px;height:16px;background:#d5fbd5"></div>
<div class="a" style="left:670px;top:550px;width:110px;height:16px;background:#d5fbd5"></div>
<div class="a" style="left:781px;top:550px;width:110px;height:16px;background:#d5fbd5"></div>
<div class="a" style="left:892px;top:550px;width:77px;height:16px;background:#d5fbd5"></div>
<div class="a" style="left:970px;top:550px;width:63px;height:16px;background:#d5fbd5"></div>
<div class="a" style="left:7px;top:565px;width:1026px;height:1px;background:rgba(40,50,20,0.24)"></div>
<div class="a" style="left:669px;top:550px;width:1px;height:16px;background:rgba(0,30,0,0.42)"></div>
<div class="a" style="left:780px;top:550px;width:1px;height:16px;background:rgba(0,30,0,0.42)"></div>
<div class="a" style="left:891px;top:550px;width:1px;height:16px;background:rgba(0,30,0,0.42)"></div>
<div class="a" style="left:969px;top:550px;width:1px;height:16px;background:rgba(0,30,0,0.42)"></div>
<div class="a" style="left:8px;top:550.06px;line-height:16px;font-size:10.5px;">firefox.exe/TCP</div>
<svg class="a" style="left:894px;top:550px" width="18" height="15" viewBox="0 0 18 15"><rect x="1" y="0.5" width="16" height="14" rx="2" fill="#f2fbf4" opacity="0.85"/><rect x="2" y="1.5" width="7.5" height="8" rx="0.8" fill="#263a78"/><rect x="3" y="2.5" width="5.5" height="6" fill="#8cc8f4"/><rect x="3.5" y="3" width="3" height="3" fill="#c0ecff"/><ellipse cx="6" cy="11" rx="3" ry="1.1" fill="#2e4a3a"/><rect x="9" y="2.3" width="7" height="8" rx="0.8" fill="#2a3f80"/><rect x="10" y="3.3" width="5" height="6" fill="#9ad8fc"/><rect x="10.5" y="3.8" width="3" height="3" fill="#c8f0ff"/><rect x="10" y="10.5" width="6" height="2" fill="#46505a"/></svg><div class="a" style="left:916px;top:550.06px;line-height:16px;font-size:10.5px;">Localhost</div>
<div class="a" style="left:971px;top:550.06px;line-height:16px;font-size:10.5px;">Connected</div>
<div class="a" style="left:7px;top:566px;width:662px;height:16px;background:#d5fbd5"></div>
<div class="a" style="left:670px;top:566px;width:110px;height:16px;background:#d5fbd5"></div>
<div class="a" style="left:781px;top:566px;width:110px;height:16px;background:#d5fbd5"></div>
<div class="a" style="left:892px;top:566px;width:77px;height:16px;background:#d5fbd5"></div>
<div class="a" style="left:970px;top:566px;width:63px;height:16px;background:#d5fbd5"></div>
<div class="a" style="left:7px;top:581px;width:1026px;height:1px;background:rgba(40,50,20,0.24)"></div>
<div class="a" style="left:669px;top:566px;width:1px;height:16px;background:rgba(0,30,0,0.42)"></div>
<div class="a" style="left:780px;top:566px;width:1px;height:16px;background:rgba(0,30,0,0.42)"></div>
<div class="a" style="left:891px;top:566px;width:1px;height:16px;background:rgba(0,30,0,0.42)"></div>
<div class="a" style="left:969px;top:566px;width:1px;height:16px;background:rgba(0,30,0,0.42)"></div>
<div class="a" style="left:8px;top:566.06px;line-height:16px;font-size:10.5px;">tlen7.exe/TCP</div>
<svg class="a" style="left:894px;top:567px" width="18" height="12" viewBox="0 0 18 12"><defs><linearGradient id="plw" x1="0" y1="0" x2="0" y2="1"><stop offset="0" stop-color="#c8c8c8"/><stop offset="0.5" stop-color="#ffffff"/></linearGradient><linearGradient id="plr" x1="0" y1="0" x2="0" y2="1"><stop offset="0" stop-color="#e01020"/><stop offset="1" stop-color="#a00010"/></linearGradient></defs><rect x="0" y="0" width="18" height="12" fill="#1a0000"/><rect x="1" y="1" width="16" height="5" fill="url(#plw)"/><rect x="1" y="6" width="16" height="5" fill="url(#plr)"/></svg><div class="a" style="left:916px;top:566.06px;line-height:16px;font-size:10.5px;">Poland</div>
<div class="a" style="left:971px;top:566.06px;line-height:16px;font-size:10.5px;">Connected</div>
<div class="cb" style="left:12px;top:661px"></div>
<div class="a" style="left:30px;top:659.96px;line-height:16px;font-size:10.5px;">Always on top</div>
<div class="a" style="left:919px;top:655px;width:106px;height:27px;border:1px solid #6a6f7a;border-radius:3px;background:linear-gradient(#f2f4fc,#e4e8f6 60%,#cfd4e6)"></div>
<div class="a" style="left:919px;width:108px;text-align:center;top:663.02px;line-height:16px;font-size:11.5px;">Close</div>
<div class="a" style="left:1004px;top:0;width:29px;height:15px;border:1px solid #3a5a80;border-top:none;background:linear-gradient(#e8f0fa 0,#e8f0fa 3px,#a9c5e9 3px,#9dbce4)"></div>
<svg class="a" style="left:1014px;top:3.5px" width="11" height="11" viewBox="0 0 11 11"><path d="M1.5 1.5L9.5 9.5M9.5 1.5L1.5 9.5" stroke="#15243a" stroke-width="2.2"/></svg>
<svg class="a" style="left:876px;top:0px" width="36" height="34" viewBox="0 0 36 34">
<defs><radialGradient id="gc" cx="0.45" cy="0.4" r="0.6"><stop offset="0" stop-color="#f4ead8"/><stop offset="0.7" stop-color="#e0c49c"/><stop offset="1" stop-color="#c09060"/></radialGradient></defs>
<g transform="translate(18,16.8)">
<g fill="#ececf2" stroke="#c4c8d4" stroke-width="0.6"><rect x="-2.8" y="-16.5" width="5.6" height="6" rx="0.8" transform="rotate(0)"/><rect x="-2.8" y="-16.5" width="5.6" height="6" rx="0.8" transform="rotate(45)"/><rect x="-2.8" y="-16.5" width="5.6" height="6" rx="0.8" transform="rotate(90)"/><rect x="-2.8" y="-16.5" width="5.6" height="6" rx="0.8" transform="rotate(135)"/><rect x="-2.8" y="-16.5" width="5.6" height="6" rx="0.8" transform="rotate(180)"/><rect x="-2.8" y="-16.5" width="5.6" height="6" rx="0.8" transform="rotate(225)"/><rect x="-2.8" y="-16.5" width="5.6" height="6" rx="0.8" transform="rotate(270)"/><rect x="-2.8" y="-16.5" width="5.6" height="6" rx="0.8" transform="rotate(315)"/></g>
<circle r="12.2" fill="#ececf2"/>
<circle r="8.6" fill="url(#gc)" stroke="#b89468" stroke-width="0.9"/>
<text x="-4.2" y="3" text-anchor="middle" font-family="Liberation Serif" font-size="9" font-weight="bold" fill="#6a6a70">2</text>
<text x="4.5" y="3" text-anchor="middle" font-family="Liberation Serif" font-size="9" font-weight="bold" fill="#9a8a80">L</text>
<path d="M1.5,-6 L-1.5,6" stroke="#2a2a3a" stroke-width="1.4"/>
</g></svg>
<div class="a" style="left:910.5px;top:0.86px;line-height:14px;font-size:12.8px;font-weight:bold;color:#fff;text-shadow:-1px -1px 0 #000,1px -1px 0 #000,-1px 1px 0 #000,1px 1px 0 #000,0 1px 0 #000,0 -1px 0 #000,1px 0 0 #000,-1px 0 0 #000;letter-spacing:0.5px;">Programy</div>
<div class="a" style="left:945.5px;top:9.39px;line-height:12px;font-size:11px;font-weight:bold;color:#d8ecf2;letter-spacing:0.3px;text-shadow:1px 1px 0 #1a2a40,0 1px 0 #1a2a40;">za</div>
<div class="a" style="left:951px;top:18.17px;line-height:14px;font-size:12.2px;font-weight:bold;color:#fff;text-shadow:-1px -1px 0 #000,1px -1px 0 #000,-1px 1px 0 #000,1px 1px 0 #000,0 1px 0 #000,0 -1px 0 #000,1px 0 0 #000,-1px 0 0 #000;letter-spacing:1px;">darmo.net.pl</div>
</body></html>
